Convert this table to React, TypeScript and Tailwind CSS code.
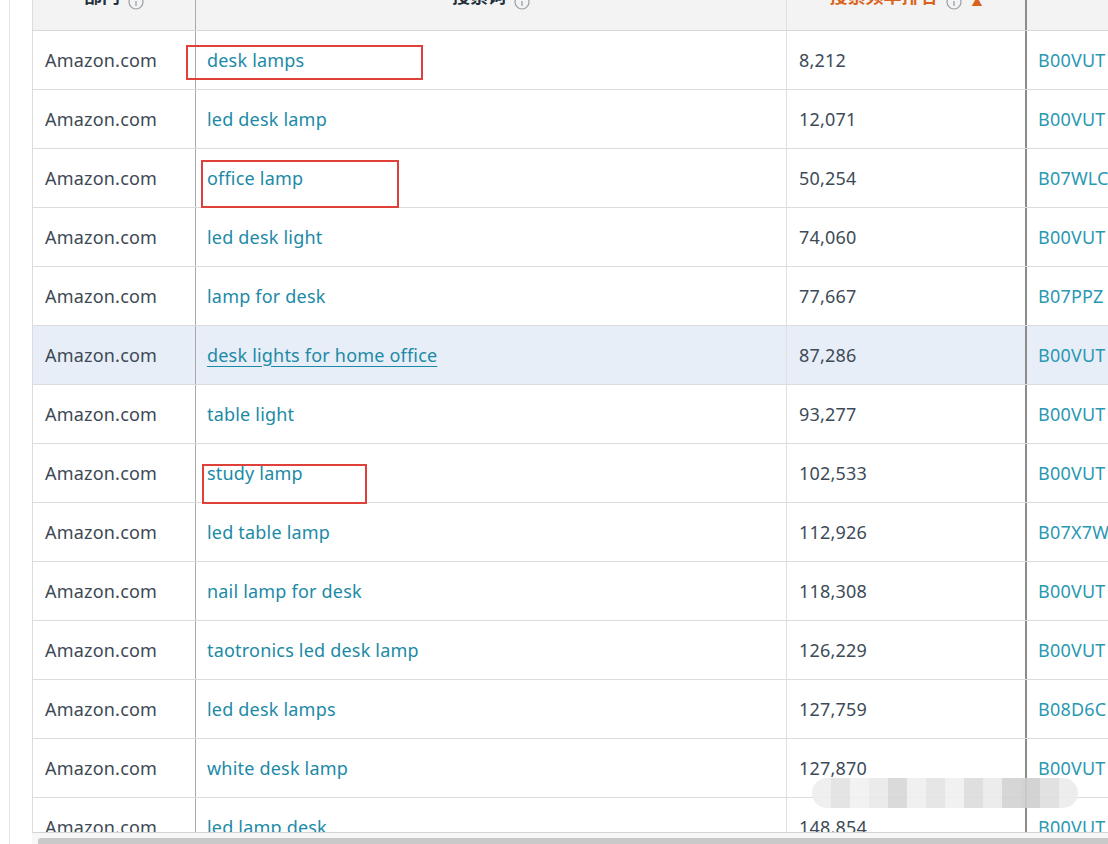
const rows = [
  { term: "desk lamps", rank: "8,212", asin: "B00VUT" },
  { term: "led desk lamp", rank: "12,071", asin: "B00VUT" },
  { term: "office lamp", rank: "50,254", asin: "B07WLC" },
  { term: "led desk light", rank: "74,060", asin: "B00VUT" },
  { term: "lamp for desk", rank: "77,667", asin: "B07PPZ" },
  { term: "desk lights for home office", rank: "87,286", asin: "B00VUT", active: true },
  { term: "table light", rank: "93,277", asin: "B00VUT" },
  { term: "study lamp", rank: "102,533", asin: "B00VUT" },
  { term: "led table lamp", rank: "112,926", asin: "B07X7W" },
  { term: "nail lamp for desk", rank: "118,308", asin: "B00VUT" },
  { term: "taotronics led desk lamp", rank: "126,229", asin: "B00VUT" },
  { term: "led desk lamps", rank: "127,759", asin: "B08D6C" },
  { term: "white desk lamp", rank: "127,870", asin: "B00VUT" },
  { term: "led lamp desk", rank: "148,854", asin: "B00VUT" },
];

function InfoIcon() {
  return (
    <svg width="16" height="16" viewBox="0 0 16 16" className="ml-2 shrink-0">
      <circle cx="8" cy="8" r="7" fill="none" stroke="#9aa0a6" strokeWidth="1.2" />
      <line x1="8" y1="7" x2="8" y2="12" stroke="#9aa0a6" strokeWidth="1.3" />
      <circle cx="8" cy="4.6" r="0.9" fill="#9aa0a6" />
    </svg>
  );
}

const blurCells = [
  "#eeeeee", "#e2e2e2", "#f1f1f1", "#e9e9e9", "#d6d6d6", "#efefef", "#e4e4e4",
  "#f0f0f0", "#dcdcdc", "#ebebeb", "#d2d2d2", "#cfcfcf", "#dedede", "#ececec",
];

export default function App() {
  return (
    <div
      className="relative w-[1108px] h-[844px] overflow-hidden bg-white"
      style={{ fontFamily: '"Noto Sans", "Noto Sans CJK SC", sans-serif' }}
    >
      <div className="flex h-full">
        {/* left gutter */}
        <div className="w-[32px] shrink-0 flex">
          <div className="w-[9px]" />
          <div className="w-px bg-[#e6e6e6]" />
        </div>

        <div className="flex-1 flex flex-col min-w-0">
          <div className="h-[832px] overflow-hidden border-l border-[#dcdcdc]">
            {/* header */}
            <div className="-mt-[31px] h-[62px] flex bg-[#f3f3f3] border-b border-[#d8d8d8] text-[18px] font-bold">
              <div className="w-[163px] shrink-0 flex items-end justify-center pb-[20px] border-r border-[#a9a9a9] text-[#23303b]">
                部门<InfoIcon />
              </div>
              <div className="w-[591px] shrink-0 flex items-end justify-center pb-[20px] border-r border-[#e0e0e0] text-[#23303b]">
                搜索词<InfoIcon />
              </div>
              <div className="w-[240px] shrink-0 flex items-end justify-center pb-[20px] border-r-2 border-[#8c8c8c] text-[#d9621c]">
                搜索频率排名<InfoIcon />
                <span className="ml-[10px] text-[11px]">▲</span>
              </div>
              <div className="flex-1" />
            </div>

            {/* rows */}
            {rows.map((r) => (
              <div
                key={r.term}
                className={`h-[59px] flex items-center border-b border-[#dcdcdc] text-[18px] tracking-[0.2px] ${
                  r.active ? "bg-[#e8eef8]" : "bg-white"
                }`}
              >
                <div className="w-[163px] shrink-0 h-full flex items-center pl-[12px] border-r border-[#a9a9a9] text-[#3d4954]">
                  Amazon.com
                </div>
                <div
                  className={`w-[591px] shrink-0 h-full flex items-center pl-[11px] border-r border-[#e0e0e0] text-[#1b8aa6] ${
                    r.active ? "underline underline-offset-[4px]" : ""
                  }`}
                >
                  {r.term}
                </div>
                <div className="w-[240px] shrink-0 h-full flex items-center pl-[12px] border-r-2 border-[#8c8c8c] text-[#3d4b58]">
                  {r.rank}
                </div>
                <div className="flex-1 h-full flex items-center pl-[11px] text-[#2a98b3] whitespace-nowrap">
                  {r.asin}
                </div>
              </div>
            ))}
          </div>

          {/* horizontal scrollbar */}
          <div className="h-[12px] border-t border-[#d4d4d4] bg-[#f7f7f7] pl-[6px] pt-[5px]">
            <div className="h-full bg-[#c9c9c9] rounded-tl-[3px]" />
          </div>
        </div>
      </div>

      {/* red annotation boxes */}
      <div className="absolute left-[186px] top-[45px] w-[237px] h-[35px] border-2 border-[#e0403a]" />
      <div className="absolute left-[201px] top-[160px] w-[198px] h-[48px] border-2 border-[#e0403a]" />
      <div className="absolute left-[202px] top-[464px] w-[165px] h-[40px] border-2 border-[#e0403a]" />

      {/* blurred watermark */}
      <div className="absolute left-[812px] top-[778px] flex h-[30px] rounded-full overflow-hidden opacity-90">
        {blurCells.map((c, i) => (
          <div key={i} className="w-[19px] h-full" style={{ background: c }} />
        ))}
      </div>
    </div>
  );
}
